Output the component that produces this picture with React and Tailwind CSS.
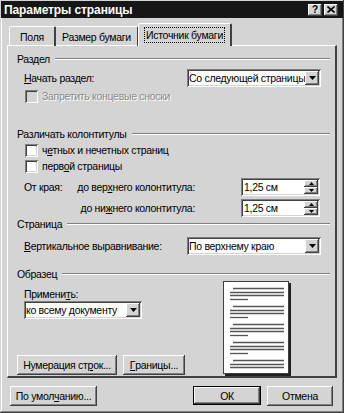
import React from 'react';

const raised =
  'shadow-[inset_-1px_-1px_#404040,inset_1px_1px_#ffffff,inset_-2px_-2px_#808080,inset_2px_2px_#d4d4d4]';
const sunken =
  'shadow-[inset_1px_1px_#808080,inset_-1px_-1px_#ffffff,inset_2px_2px_#404040,inset_-2px_-2px_#d4d4d4]';

const Group = ({ title, className = '' }) => (
  <div className={`flex items-center h-[14px] ${className}`}>
    <span>{title}</span>
    <div className="flex-1 ml-[5px] mr-[4px] h-[2px] border-t border-t-[#808080] border-b border-b-white" />
  </div>
);

const Arrow = () => (
  <svg width="7" height="4" viewBox="0 0 7 4">
    <path d="M0 0h7L3.5 4z" fill="#000" />
  </svg>
);

const Select = ({ value, className = '' }) => (
  <div className={`relative h-[18px] bg-white ${sunken} flex items-center pl-[2px] ${className}`}>
    <span className="whitespace-nowrap">{value}</span>
    <div className={`absolute right-[2px] top-[2px] w-[14px] h-[14px] bg-[#d4d4d4] ${raised} flex items-center justify-center`}>
      <Arrow />
    </div>
  </div>
);

const Spin = ({ value }) => (
  <div className={`relative w-[79px] h-[18px] bg-white ${sunken} flex items-center pl-[3px]`}>
    <span>{value}</span>
    <div className="absolute right-[2px] top-[2px] w-[14px] h-[14px] flex flex-col">
      <div className={`h-[7px] bg-[#d4d4d4] ${raised} flex items-center justify-center`}>
        <svg width="5" height="3" viewBox="0 0 5 3"><path d="M2.5 0L5 3H0z" fill="#000" /></svg>
      </div>
      <div className={`h-[7px] bg-[#d4d4d4] ${raised} flex items-center justify-center`}>
        <svg width="5" height="3" viewBox="0 0 5 3"><path d="M0 0h5L2.5 3z" fill="#000" /></svg>
      </div>
    </div>
  </div>
);

const Check = ({ children, disabled }) => (
  <div className="flex items-center h-[14px] pl-[8px]">
    <div className={`w-[13px] h-[13px] ${disabled ? 'bg-[#d4d4d4]' : 'bg-white'} ${sunken}`} />
    <span className={`ml-[4px] ${disabled ? 'text-[#8a8a8a] [text-shadow:1px_1px_#ffffff]' : ''}`}>{children}</span>
  </div>
);

const Btn = ({ children, className = '' }) => (
  <div className={`h-[20px] bg-[#d4d4d4] ${raised} flex items-center justify-center whitespace-nowrap ${className}`}>
    {children}
  </div>
);

const U = ({ children }) => <span className="underline underline-offset-1">{children}</span>;

const Preview = () => {
  const lines = [];
  const groups = [286, 304, 322, 340, 358];
  groups.forEach((g, i) => {
    lines.push([10, g, 61]);
    lines.push([7, g + 4, 61]);
    lines.push([7, g + 7, 61]);
    if (i < 4) lines.push([7, g + 11, 25]);
  });
  return (
    <svg width="68" height="95" viewBox="0 0 68 95" className="ml-auto mr-[43px]">
      <rect x="2" y="2" width="66" height="93" fill="#202020" />
      <rect x="0.5" y="0.5" width="65" height="92" fill="#fff" stroke="#404040" />
      {lines.map(([x1, y, x2], i) => (
        <line key={i} x1={x1} x2={x2} y1={y - 279 + 0.5} y2={y - 279 + 0.5} stroke="#555" strokeWidth="1.3" />
      ))}
    </svg>
  );
};

const App = () => {
  return (
    <div className="w-[344px] h-[413px] bg-[#d4d4d4] text-black text-[10.5px] leading-[14px] tracking-[-0.3px] font-['Liberation_Sans',Arial,sans-serif] relative overflow-hidden shadow-[inset_-1px_-1px_#404040,inset_1px_1px_#d4d4d4,inset_-2px_-2px_#808080,inset_2px_2px_#ffffff]">
      {/* title bar */}
      <div className="mx-[1px] mt-[1px] h-[17px] bg-[#161616] flex items-center pl-[3px] pr-[5px]">
        <span className="text-white font-bold text-[12px] tracking-[-0.1px]">Параметры страницы</span>
        <div className="ml-auto flex gap-[2px]">
          <div className={`w-[14px] h-[12px] bg-[#d4d4d4] ${raised} flex items-center justify-center font-bold text-[10px] leading-none`}>?</div>
          <div className={`w-[14px] h-[12px] bg-[#d4d4d4] ${raised} flex items-center justify-center`}>
            <svg width="8" height="7" viewBox="0 0 8 7"><path d="M0.5 0.5l7 6M7.5 0.5l-7 6" stroke="#000" strokeWidth="1.6" /></svg>
          </div>
        </div>
      </div>

      {/* tabs */}
      <div className="flex items-end h-[27px] pl-[9px] relative z-10">
        <div className="w-[47px] h-[20px] border-t border-l border-white border-r-[2px] border-r-[#404040] rounded-t-[2px] flex items-center justify-center -mb-px">Поля</div>
        <div className="w-[83px] h-[20px] border-t border-r-[2px] border-r-[#404040] rounded-t-[2px] border-white flex items-center justify-center -mb-px">Размер бумаги</div>
        <div className="w-[94px] h-[23px] -ml-px bg-[#d4d4d4] border-t border-l border-white border-r-[2px] border-r-[#404040] rounded-t-[2px] flex items-center justify-center -mb-[1px] pb-[1px]">
          <span className="outline outline-1 outline-dotted outline-black px-[1px]">Источник бумаги</span>
        </div>
      </div>

      {/* panel */}
      <div className="mx-[7px] h-[333px] border-t border-l border-white border-r-[2px] border-r-[#404040] border-b-[2px] border-b-[#404040] pl-[9px] pr-[1px] pt-[6px] flex flex-col">
        <Group title="Раздел" />
        <div className="flex items-center h-[18px] mt-[3px] pl-[7px]">
          <span><U>Н</U>ачать раздел:</span>
          <Select value="Со следующей страницы" className="ml-auto mr-[13px] w-[134px]" />
        </div>
        <div className="mt-[2px]">
          <Check disabled>Запретить концевые сноски</Check>
        </div>

        <Group title="Различать колонтитулы" className="mt-[24px]" />
        <div className="mt-[2px]">
          <Check>ч<U>е</U>тных и нечетных страниц</Check>
        </div>
        <div className="mt-[2px]">
          <Check>перв<U>о</U>й страницы</Check>
        </div>
        <div className="flex items-center h-[18px] mt-[5px] pl-[7px] whitespace-nowrap">
          <span className="w-[51px]">От края:</span>
          <span className="w-[120px] text-right">до вер<U>х</U>него колонтитула:</span>
          <div className="ml-auto mr-[14px]"><Spin value="1,25 см" /></div>
        </div>
        <div className="flex items-center h-[18px] mt-[3px] pl-[7px] whitespace-nowrap">
          <span className="w-[51px]" />
          <span className="w-[120px] text-right">до ни<U>ж</U>него колонтитула:</span>
          <div className="ml-auto mr-[14px]"><Spin value="1,25 см" /></div>
        </div>

        <Group title="Страница" className="mt-[0px]" />
        <div className="flex items-center h-[18px] mt-[6px] pl-[7px]">
          <span><U>В</U>ертикальное выравнивание:</span>
          <Select value="По верхнему краю" className="ml-auto mr-[13px] w-[134px]" />
        </div>

        <Group title="Образец" className="mt-[12px]" />
        <div className="flex">
          <div className="flex flex-col pl-[7px]">
            <div className="h-[12px] mt-[7px] leading-[12px]">Примени<U>т</U>ь:</div>
            <Select value="ко всему документу" className="w-[118px] mt-[1px]" />
            <div className="flex gap-[6px] mt-[36px] -ml-[7px]">
              <Btn className="w-[100px]">Нумерация ст<U>р</U>ок...</Btn>
              <Btn className="w-[62px]"><U>Г</U>раницы...</Btn>
            </div>
          </div>
          <Preview />
        </div>
      </div>

      {/* bottom buttons */}
      <div className="flex items-center mt-[8px] px-[10px]">
        <Btn className="w-[87px] h-[19px]">По умол<U>ч</U>анию...</Btn>
        <div className="ml-auto flex gap-[6px] mr-[1px]">
          <div className="w-[68px] h-[19px] border border-black">
            <Btn className="w-full h-full">ОК</Btn>
          </div>
          <Btn className="w-[66px] h-[19px]">Отмена</Btn>
        </div>
      </div>
    </div>
  );
};

export default App;
